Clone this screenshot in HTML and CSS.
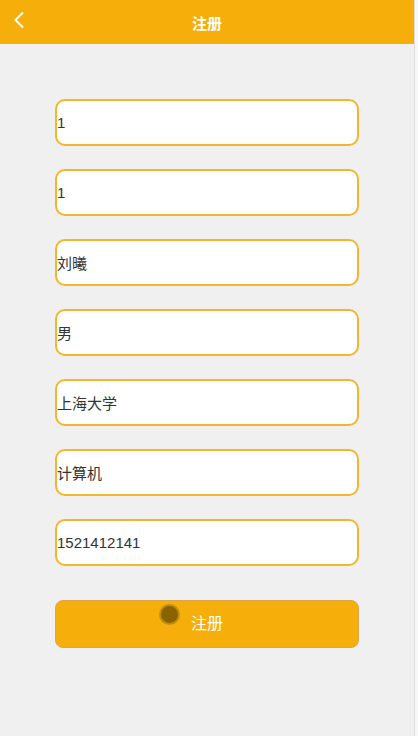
FILE: index.html
```html
<!DOCTYPE html>
<html lang="zh">
<head>
<meta charset="utf-8">
<title>注册</title>
<link rel="stylesheet" href="styles.css">
</head>
<body>
<div class="page">
  <header class="bar">
    <svg class="back" width="12" height="18" viewBox="0 0 12 18"><path d="M10 1.5 L2.5 9 L10 16.5" fill="none" stroke="#fff" stroke-width="2"/></svg>
    <h1 class="title">注册</h1>
  </header>
  <main class="form">
    <div class="field">1</div>
    <div class="field">1</div>
    <div class="field">刘曦</div>
    <div class="field">男</div>
    <div class="field">上海大学</div>
    <div class="field">计算机</div>
    <div class="field">1521412141</div>
    <button class="submit"><span class="dot"></span><span class="label">注册</span></button>
  </main>
</div>
<div class="rail"></div>
</body>
</html>
```
FILE: styles.css
```css
html, body { margin: 0; padding: 0; }
body {
  display: flex;
  height: 736px;
  background: #f0f0f0;
  font-family: "Liberation Sans", "Noto Sans CJK SC", sans-serif;
  overflow: hidden;
}
.page { width: 414px; flex: none; }
.rail { flex: 1; border-left: 1px solid #dcdcdc; background: #f7f7f7; }
.bar {
  height: 44px;
  background: #f5ae0a;
  display: flex;
  align-items: center;
  justify-content: center;
  position: relative;
}
.back { position: absolute; left: 13px; top: 11px; }
.title {
  margin: 0;
  color: #fff;
  font-size: 15px;
  font-weight: bold;
}
.form {
  display: flex;
  flex-direction: column;
  gap: 23px;
  padding: 55px 0 0 55px;
}
.field {
  box-sizing: border-box;
  width: 304px;
  height: 47px;
  border: 2px solid #efb62e;
  border-radius: 10px;
  background: #fff;
  color: #333;
  font-size: 15px;
  display: flex;
  align-items: center;
  padding-left: 0;
}
.submit {
  box-sizing: border-box;
  position: relative;
  margin-top: 11px;
  width: 304px;
  height: 48px;
  border: 1px solid #d9a84a;
  border-radius: 8px;
  background: #f6ae0b;
  display: flex;
  align-items: center;
  justify-content: center;
  padding: 0;
  font-family: inherit;
}
.dot {
  position: absolute;
  left: 103px;
  top: 3px;
  width: 21px;
  height: 21px;
  border-radius: 50%;
  background: #8a6300;
  border: 2px solid #c08d12;
  box-sizing: border-box;
}
.label {
  color: #fff;
  font-size: 16px;
  margin-top: -5px;
}
```
